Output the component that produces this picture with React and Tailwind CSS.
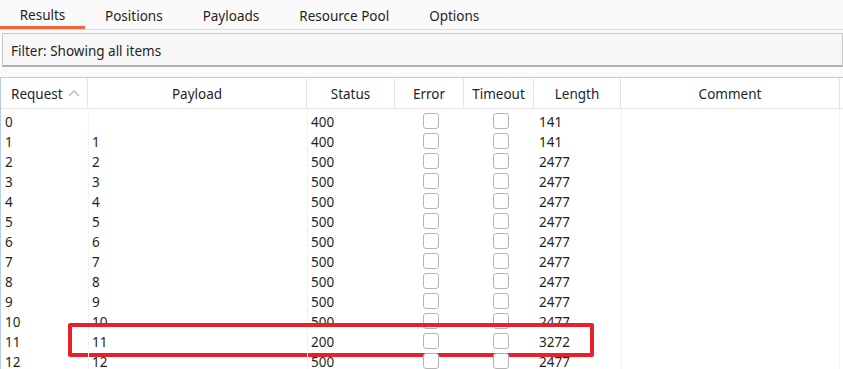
import React from "react";

const tabs = ["Results", "Positions", "Payloads", "Resource Pool", "Options"];

const rows = [
  { req: "0", payload: "", status: "400", length: "141" },
  { req: "1", payload: "1", status: "400", length: "141" },
  { req: "2", payload: "2", status: "500", length: "2477" },
  { req: "3", payload: "3", status: "500", length: "2477" },
  { req: "4", payload: "4", status: "500", length: "2477" },
  { req: "5", payload: "5", status: "500", length: "2477" },
  { req: "6", payload: "6", status: "500", length: "2477" },
  { req: "7", payload: "7", status: "500", length: "2477" },
  { req: "8", payload: "8", status: "500", length: "2477" },
  { req: "9", payload: "9", status: "500", length: "2477" },
  { req: "10", payload: "10", status: "500", length: "2477" },
  { req: "11", payload: "11", status: "200", length: "3272", marked: true },
  { req: "12", payload: "12", status: "500", length: "2477" },
];

const cols = "grid grid-cols-[87px_219px_88px_69px_70px_87px_219px_1fr]";

const Checkbox = () => (
  <div className="w-4 h-4 rounded-[3px] border-[1.5px] border-[#b4b4b4] bg-white" />
);

const App = () => {
  return (
    <div
      className="w-[843px] h-[369px] overflow-hidden bg-[#fafafa] text-[#1f1f1f] text-[13.5px]"
      style={{ fontFamily: '"Noto Sans", "Open Sans", sans-serif' }}
    >
      {/* Tabs */}
      <div className="flex h-[30px] border-b border-[#dcdcdc]">
        {tabs.map((tab, i) => (
          <div
            key={tab}
            className={`px-5 flex items-center pt-[4px] ${
              i === 0 ? "border-b-[3px] border-[#f0673a] w-[85px] justify-center" : ""
            }`}
          >
            {tab}
          </div>
        ))}
      </div>

      {/* Filter */}
      <div className="mt-[3px] ml-[2px] h-[34px] flex items-center px-2 pt-[3px] bg-[#f7f7f7] border border-[#c8c8c8] border-b-2 border-b-[#b0b0b0]">
        Filter: Showing all items
      </div>

      {/* Table */}
      <div className="mt-[10px] bg-white border-t border-l border-[#b6cde6] h-[300px]">
        <div className={`${cols} h-[31px] border-b border-[#e6e6e6]`}>
          <div className="flex items-center pl-[10px] pt-[2px] gap-[5px] border-r border-[#e6e6e6]">
            Request
            <svg width="12" height="8" viewBox="0 0 12 8" className="mt-[-2px]">
              <path d="M1 7 L6 2 L11 7" fill="none" stroke="#b8b8b8" strokeWidth="1.3" />
            </svg>
          </div>
          {["Payload", "Status", "Error", "Timeout", "Length", "Comment"].map((h) => (
            <div key={h} className="flex items-center justify-center pt-[2px] border-r border-[#e6e6e6]">
              {h}
            </div>
          ))}
          <div />
        </div>

        <div className="pt-px">
          {rows.map((r) => (
            <div key={r.req} className={`${cols} h-5 relative`}>
              <div className="pl-[4px] pt-[2px] flex items-center">{r.req}</div>
              <div className="pl-[3px] pt-[2px] flex items-center border-l border-[#f2f2f2]">{r.payload}</div>
              <div className="pl-[3px] pt-[2px] flex items-center border-l border-[#f2f2f2]">{r.status}</div>
              <div className="flex items-center pl-[28px]">
                <Checkbox />
              </div>
              <div className="flex items-center pl-[29px]">
                <Checkbox />
              </div>
              <div className="pl-[5px] pt-[2px] flex items-center">{r.length}</div>
              <div className="border-l border-[#f2f2f2] border-r" />
              <div />
              {r.marked && (
                <div className="absolute left-[67px] w-[526px] top-[-7px] bottom-[-7px] border-4 border-[#e8202a] rounded-[2px]" />
              )}
            </div>
          ))}
        </div>
      </div>
    </div>
  );
};

export default App;
